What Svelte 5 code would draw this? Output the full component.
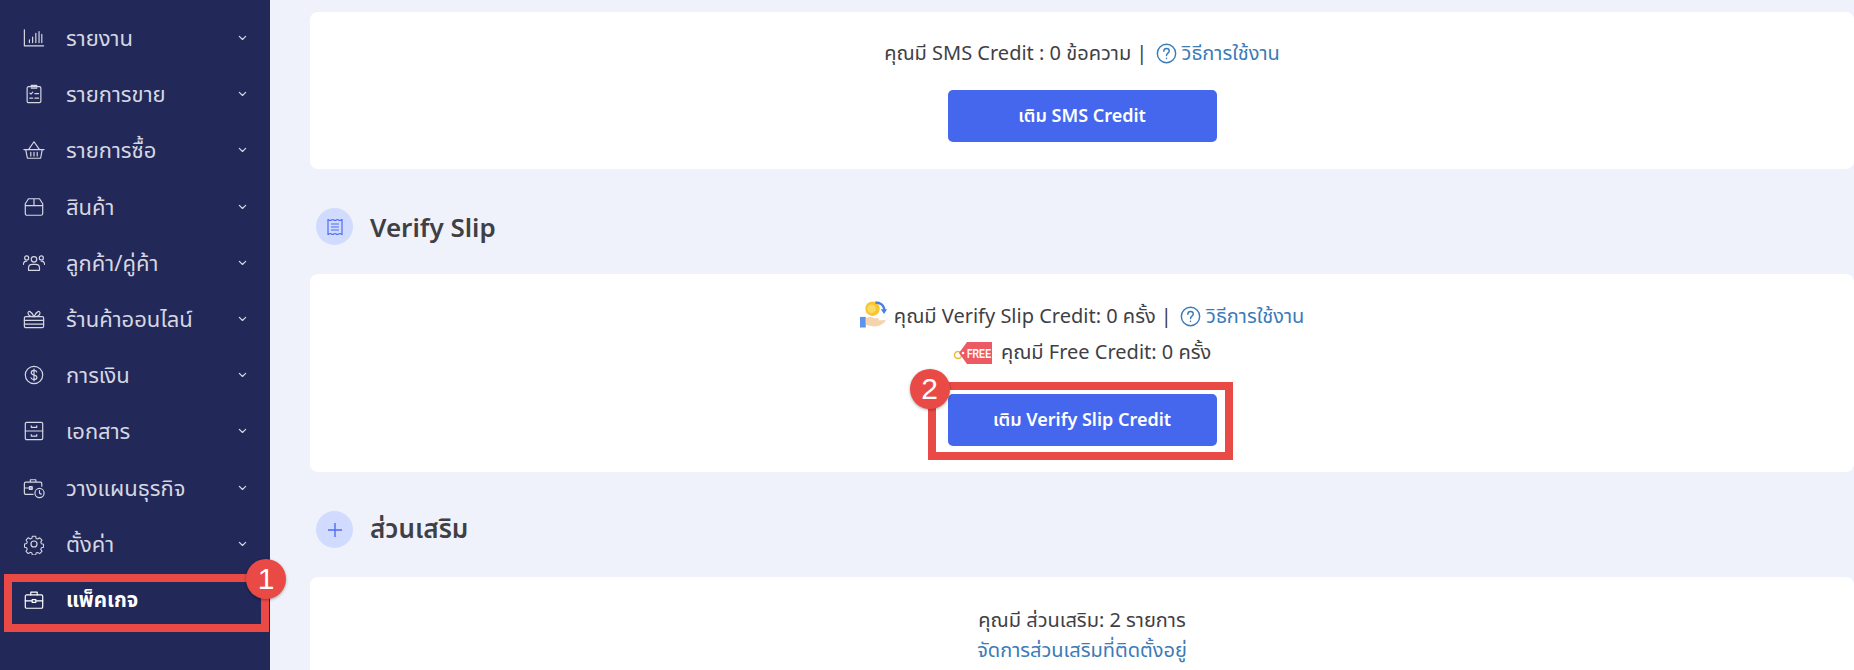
<script lang="ts">
  const menu = [
    { label: 'รายงาน', icon: 'chart' },
    { label: 'รายการขาย', icon: 'clipboard' },
    { label: 'รายการซื้อ', icon: 'basket' },
    { label: 'สินค้า', icon: 'box' },
    { label: 'ลูกค้า/คู่ค้า', icon: 'users' },
    { label: 'ร้านค้าออนไลน์', icon: 'gift' },
    { label: 'การเงิน', icon: 'dollar' },
    { label: 'เอกสาร', icon: 'cabinet' },
    { label: 'วางแผนธุรกิจ', icon: 'plan' },
    { label: 'ตั้งค่า', icon: 'gear' },
  ];
</script>

{#snippet help()}
  <svg class="help" viewBox="0 0 22 22" fill="none" stroke="currentColor" stroke-width="1.5" stroke-linecap="round">
    <circle cx="11" cy="11" r="9.6" />
    <path d="M8.2 8.6c0-1.7 1.3-2.8 2.9-2.8s2.8 1.1 2.8 2.5c0 2.3-2.9 2.4-2.9 4.7" />
    <path d="M11 15.9v.3" />
  </svg>
{/snippet}

{#snippet menuIcon(name: string)}
  <svg class="nav-icon" viewBox="0 0 24 24" fill="none" stroke="currentColor" stroke-width="1.3" stroke-linecap="round" stroke-linejoin="round">
    {#if name === 'chart'}
      <path d="M1.500 3v17.500h21M7 17v-3M10.500 17v-6M14 17V7M17.500 17V5M20.500 17V8" />
    {:else if name === 'clipboard'}
      <rect x="4.500" y="4" width="15" height="17.500" rx="1.500" />
      <path d="M9 4V2.500h6V4M9 5.500h6M7.500 11l1.200 1.200 2-2.200M13 11.500h4M7.500 16.500h3M13 16.500h4" />
    {:else if name === 'basket'}
      <path d="M1 11.500h22M3 11.500l1.800 9.500h14.400l1.800-9.500M6 11.500 12 3l6 8.500M8.500 14.500v4M12 14.500v4M15.500 14.500v4" />
    {:else if name === 'box'}
      <path d="M6 3h12l3.500 5.500V19a2 2 0 0 1-2 2h-15a2 2 0 0 1-2-2V8.500zM2.500 10.500h19M12 3v7.500" />
    {:else if name === 'users'}
      <circle cx="12" cy="8" r="3" />
      <circle cx="4" cy="6.500" r="2.200" />
      <circle cx="20" cy="6.500" r="2.200" />
      <path d="M6 20v-2.500c0-2.500 2-4 4-4h4c2 0 4 1.500 4 4V20zM.5 13.500c0-2 1.500-3.500 3.500-3.500M23.500 13.500c0-2-1.500-3.500-3.500-3.500" />
    {:else if name === 'gift'}
      <rect x="1.500" y="9.500" width="21" height="12" rx="1.500" />
      <path d="M1.500 13.500h21M1.500 17.500h21M12 9.500C9 3 5.500 2.500 5.500 5.500c0 2.500 3 4 6.500 4zm0 0c3-6.500 6.500-7 6.500-4 0 2.500-3 4-6.500 4z" />
    {:else if name === 'dollar'}
      <circle cx="12" cy="12" r="9.500" />
      <path d="M15 8.800C14.500 7.500 13.300 7 12 7c-1.700 0-3 .9-3 2.500 0 3.500 6.200 1.800 6.200 5 0 1.600-1.500 2.500-3.200 2.500-1.400 0-2.700-.6-3.200-1.900M12 5.500V18.500" />
    {:else if name === 'cabinet'}
      <rect x="2.500" y="2.500" width="19" height="19" rx="1.500" />
      <path d="M2.500 12h19M9 6.500V8h6V6.500M9 16v1.500h6V16" />
    {:else if name === 'plan'}
      <path d="M11 19H3a1.500 1.500 0 0 1-1.500-1.500V7A1.500 1.500 0 0 1 3 5.500h16A1.500 1.500 0 0 1 20.500 7v3M8 5.500V3h6v2.500M1.500 12h9M7 10.500h3v3H7z" />
      <circle cx="18" cy="17.500" r="5" />
      <path d="M18 14.800v2.900l1.800 1" />
    {:else if name === 'gear'}
      <circle cx="12" cy="12" r="3.300" />
      <path d="M10 2.500h4l.6 2.700 1.900.8 2.400-1.500 2.800 2.800-1.500 2.400.8 1.900 2.500.6v3.800l-2.500.6-.8 1.900 1.500 2.400-2.800 2.800-2.400-1.500-1.900.8-.6 2.300h-4l-.6-2.400-1.900-.8-2.400 1.500-2.800-2.800 1.500-2.400-.8-1.900-2.500-.6v-3.800l2.500-.6.8-1.900-1.500-2.400 2.800-2.800 2.400 1.500 1.900-.8z" transform="translate(1.200 1.200) scale(.9)" />
    {:else}
      <rect x="2.500" y="6.500" width="19" height="14.500" rx="1.500" />
      <path d="M8.500 6.500V3.500h7v3M2.500 13h7M14.500 13h7M10 11.500h4v3h-4z" />
    {/if}
  </svg>
{/snippet}

<div class="page">
  <aside class="sidebar">
    {#each menu as item}
      <div class="nav-item">
        {@render menuIcon(item.icon)}
        <span class="nav-label">{item.label}</span>
        <svg class="chevron" viewBox="0 0 10 6" fill="none" stroke="currentColor" stroke-width="1.4" stroke-linecap="round" stroke-linejoin="round">
          <path d="M1.500 1.200 5 4.600l3.500-3.400" />
        </svg>
      </div>
    {/each}
    <div class="nav-item active">
      {@render menuIcon('case')}
      <span class="nav-label">แพ็คเกจ</span>
      <div class="mark-box side-mark"></div>
      <div class="badge side-badge">1</div>
    </div>
  </aside>

  <main class="content">
    <section class="card sms-card">
      <p class="line">คุณมี SMS Credit : 0 ข้อความ | {@render help()}<a href="#sms" class="link">วิธีการใช้งาน</a></p>
      <button class="primary sms-btn">เติม SMS Credit</button>
    </section>

    <h2 class="section-title">
      <span class="circle">
        <svg viewBox="0 0 18 20" width="18" height="20" fill="none" stroke="#4f6ef2" stroke-width="1.200">
          <path d="M2 2.500c1 0 1 1 2.300 1s1-1 2.300-1 1 1 2.400 1 1-1 2.400-1 1 1 2.300 1 1.300-1 2.300-1v15c-1 0-1-1-2.300-1s-1 1-2.300 1-1-1-2.400-1-1 1-2.400 1-1-1-2.300-1-1.300 1-2.300 1zM5 7h8M5 10h8M5 13h8" />
        </svg>
      </span>
      Verify Slip
    </h2>

    <section class="card verify-card">
      <p class="line">
        <svg class="coin" viewBox="0 0 28 28">
          <circle cx="13" cy="8" r="7.500" fill="#f7c52e" />
          <circle cx="12" cy="8" r="4.500" fill="#fbd968" />
          <path d="M16 1.500c5 0 9 3 9.500 8" fill="none" stroke="#4a7fe0" stroke-width="2.500" />
          <path d="M21.500 8.500h6.500l-3 5z" fill="#4a7fe0" />
          <rect x="0" y="16.500" width="6" height="11" fill="#5b93ee" />
          <path d="M6 18c4-2.500 7-1 9 0h4c1 0 1 1.500 0 2h5c2-1 3.500 0 2 1.500-3 3-7 5-11 5l-9-1.500z" fill="#f5d3ad" />
        </svg>
        คุณมี Verify Slip Credit: 0 ครั้ง | {@render help()}<a href="#verify" class="link">วิธีการใช้งาน</a>
      </p>
      <p class="line second">
        <svg class="tag" viewBox="0 0 39 24">
          <circle cx="5" cy="14" r="3.500" fill="none" stroke="#f0b93a" stroke-width="1.500" />
          <path d="M6 12 14 1h25v22H14z" fill="#ec5b63" />
          <circle cx="10" cy="12" r="1.300" fill="#fff" />
          <text x="20" y="17" class="tag-text" transform="scale(.7 1)">FREE</text>
        </svg>
        คุณมี Free Credit: 0 ครั้ง
      </p>
      <div class="btn-wrap">
        <button class="primary verify-btn">เติม Verify Slip Credit</button>
        <div class="mark-box btn-mark"></div>
        <div class="badge btn-badge">2</div>
      </div>
    </section>

    <h2 class="section-title">
      <span class="circle">
        <svg viewBox="0 0 16 16" width="16" height="16" fill="none" stroke="#4f6ef2" stroke-width="1.400"><path d="M8 1v14M1 8h14" /></svg>
      </span>
      ส่วนเสริม
    </h2>

    <section class="card addon-card">
      <p class="line">คุณมี ส่วนเสริม: 2 รายการ</p>
      <a href="#addons" class="link addon-link">จัดการส่วนเสริมที่ติดตั้งอยู่</a>
    </section>
  </main>
</div>

<style>
  :global(body) {
    margin: 0;
  }

  .page {
    display: flex;
    height: 670px;
    overflow: hidden;
    background: #eff2fa;
    font-family: "Noto Sans", "Noto Sans Thai", "Liberation Sans", sans-serif;
    color: #3f3f46;
  }

  /* ── Sidebar ──────────────────────────────────────────── */
  .sidebar {
    position: relative;
    z-index: 2;
    flex: 0 0 270px;
    box-sizing: border-box;
    padding-top: 10px;
    background: #222858;
    color: #d5d7e2;
  }

  .nav-item {
    position: relative;
    display: flex;
    align-items: center;
    height: 56.2px;
    padding-left: 23px;
    box-sizing: border-box;
  }

  .nav-icon {
    flex: none;
    width: 22px;
    height: 22px;
    margin-right: 21px;
  }

  .nav-label {
    flex: 1;
    margin-top: -2px;
    font-size: 22px;
    line-height: 30px;
    white-space: nowrap;
  }

  .chevron {
    width: 9px;
    height: 6px;
    margin-right: 23px;
  }

  .active {
    color: #fff;
  }

  .active .nav-label {
    font-size: 20.5px;
    font-weight: 700;
  }

  /* ── Main column ──────────────────────────────────────── */
  .content {
    flex: 1;
    min-width: 0;
    padding: 12px 0 0 40px;
  }

  .card {
    display: flex;
    flex-direction: column;
    align-items: center;
    background: #fff;
    border-radius: 8px;
    box-sizing: border-box;
  }

  .sms-card {
    height: 157px;
    padding-top: 27px;
  }

  .verify-card {
    height: 198px;
    padding-top: 27px;
  }

  .addon-card {
    height: 120px;
    padding-top: 29px;
  }

  .line {
    margin: 0;
    line-height: 27px;
    font-size: 20px;
    text-align: center;
    white-space: nowrap;
  }

  .second {
    margin-top: 9px;
  }

  .link {
    color: #3b7bb8;
    text-decoration: none;
    font-size: 20px;
    line-height: 27px;
  }

  .addon-link {
    margin-top: 3px;
  }

  .help {
    width: 21px;
    height: 21px;
    margin: 0 5px 0 3px;
    vertical-align: -4px;
    color: #3b7bb8;
  }

  .coin {
    width: 27px;
    height: 27px;
    margin-right: 2px;
    vertical-align: -5px;
  }

  .tag {
    width: 39px;
    height: 24px;
    margin-right: 4px;
    vertical-align: -6px;
  }

  .tag-text {
    font-size: 13px;
    font-weight: 700;
    fill: #fff;
    font-family: "Liberation Sans", sans-serif;
  }

  .primary {
    display: block;
    width: 269px;
    height: 52px;
    padding: 0;
    border: 0;
    border-radius: 5px;
    background: #4467ee;
    color: #fff;
    font-family: inherit;
    font-size: 18px;
    font-weight: 600;
  }

  .sms-btn {
    margin-top: 24px;
  }

  .btn-wrap {
    position: relative;
    margin-top: 29px;
  }

  .section-title {
    display: flex;
    align-items: center;
    gap: 17px;
    height: 105px;
    margin: 0;
    padding: 10px 0 0 6px;
    box-sizing: border-box;
    font-size: 26px;
    font-weight: 600;
    color: #3f3f46;
  }

  .circle {
    display: flex;
    align-items: center;
    justify-content: center;
    width: 37px;
    height: 37px;
    border-radius: 50%;
    background: #d0dbff;
  }

  /* ── Annotations over the screenshot ──────────────────── */
  .mark-box {
    position: absolute;
    box-sizing: border-box;
    border: 8px solid #ea4a45;
    pointer-events: none;
  }

  .side-mark {
    left: 4px;
    top: 2px;
    width: 265px;
    height: 58px;
  }

  .btn-mark {
    left: -20px;
    top: -12px;
    width: 305px;
    height: 78px;
  }

  .badge {
    position: absolute;
    display: flex;
    align-items: center;
    justify-content: center;
    width: 40px;
    height: 40px;
    border-radius: 50%;
    background: #ea4a45;
    color: #fff;
    font-family: "Liberation Sans", sans-serif;
    font-size: 30px;
    box-shadow: 0 1px 3px rgba(0, 0, 0, 0.35);
  }

  .side-badge {
    left: 246px;
    top: -13px;
  }

  .btn-badge {
    left: -38px;
    top: -25px;
  }
</style>
